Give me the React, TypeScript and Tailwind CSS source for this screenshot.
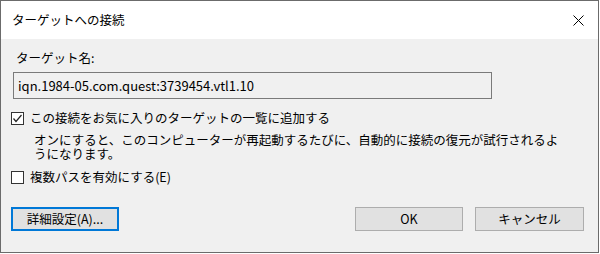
import React from "react";

const jp = { fontFamily: '"Noto Sans CJK JP", "Noto Sans", sans-serif' };

const CheckBox: React.FC<{ checked?: boolean }> = ({ checked }) => (
  <span className="w-[13px] h-[13px] border border-[#333333] bg-white flex items-center justify-center shrink-0">
    {checked && (
      <svg width="11" height="11" viewBox="0 0 11 11">
        <path d="M1.5 5.5 L4 8.5 L9.5 2" fill="none" stroke="#222222" strokeWidth="1.2" />
      </svg>
    )}
  </span>
);

const App: React.FC = () => {
  return (
    <div className="w-[600px] h-[254px] bg-white" style={jp}>
      <div className="w-[599px] h-[253px] border border-[#6b6b6b] bg-[#f0f0f0] flex flex-col text-[12.5px] text-black">
        <div className="h-[38px] bg-white flex items-center justify-between pl-[11px] pr-[14px]">
          <span>ターゲットへの接続</span>
          <svg width="11" height="11" viewBox="0 0 11 11">
            <path d="M0.5 0.5 L10.5 10.5 M10.5 0.5 L0.5 10.5" stroke="#000000" strokeWidth="1" />
          </svg>
        </div>

        <div className="flex flex-col pl-[12px] pr-[14px]">
          <div className="mt-[10px] pl-[3px] leading-[18px]">ターゲット名:</div>
          <div className="mt-[5px] w-[479px] h-[27px] border border-[#7a7a7a] bg-[#f0f0f0] flex items-center pl-[4px] text-[13px]">
            iqn.1984-05.com.quest:3739454.vtl1.10
          </div>

          <div className="mt-[10px] flex items-center gap-[6px] leading-[18px] -ml-[2px]">
            <CheckBox checked />
            <span>この接続をお気に入りのターゲットの一覧に追加する</span>
          </div>
          <div className="ml-[21px] mt-[6px] leading-[14px]">
            <div>オンにすると、このコンピューターが再起動するたびに、自動的に接続の復元が試行されるよ</div>
            <div>うになります。</div>
          </div>

          <div className="mt-[7px] flex items-center gap-[6px] leading-[18px] -ml-[2px]">
            <CheckBox />
            <span>複数パスを有効にする(E)</span>
          </div>

          <div className="mt-[21px] flex items-center -ml-[2px]">
            <button className="w-[108px] h-[24px] border-2 border-[#0078d7] bg-[#e1e1e1] flex items-center justify-center">
              詳細設定(A)...
            </button>
            <div className="flex-1" />
            <button className="w-[108px] h-[24px] border border-[#adadad] bg-[#e1e1e1] flex items-center justify-center">
              OK
            </button>
            <button className="ml-[12px] w-[109px] h-[24px] border border-[#adadad] bg-[#e1e1e1] flex items-center justify-center">
              キャンセル
            </button>
          </div>
        </div>
      </div>
    </div>
  );
};

export default App;
